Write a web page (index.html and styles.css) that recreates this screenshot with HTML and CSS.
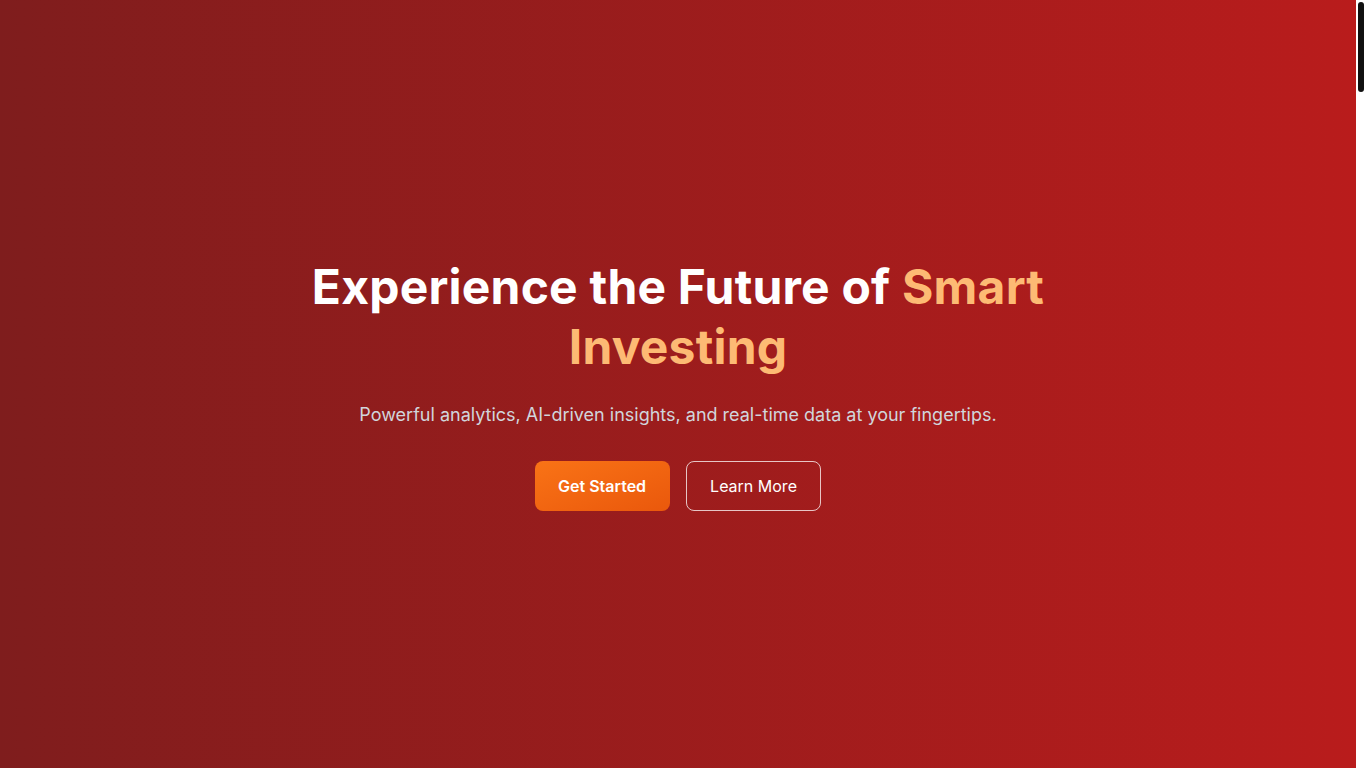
FILE: index.html
```html
<!DOCTYPE html>
<html lang="en">
<head>
<meta charset="utf-8">
<title>Smart Investing</title>
<link rel="stylesheet" href="styles.css">
</head>
<body>
<main class="page">
  <section class="hero">
    <div class="hero-inner">
      <h1 class="hero-title">Experience the Future of <span class="accent">Smart Investing</span></h1>
      <p class="hero-sub">Powerful analytics, AI-driven insights, and real-time data at your fingertips.</p>
      <div class="hero-actions">
        <a class="btn btn-primary" href="#">Get Started</a>
        <a class="btn btn-outline" href="#">Learn More</a>
      </div>
    </div>
  </section>
</main>
<div class="scrollbar" aria-hidden="true"><div class="scrollbar-thumb"></div></div>
</body>
</html>
```
FILE: styles.css
```css
* { box-sizing: border-box; }
body {
  margin: 0;
  font-family: Inter, "Noto Sans", sans-serif;
  background: #ffffff;
}
.page {
  margin-right: 10px;
}
.hero {
  min-height: 100vh;
  display: flex;
  align-items: center;
  justify-content: center;
  background: linear-gradient(to right, #7f1d1d, #b91c1c);
  padding: 0 16px;
}
.hero-inner {
  max-width: 768px;
  text-align: center;
}
.hero-title {
  margin: 0 0 24px;
  font-size: 48px;
  line-height: 60px;
  font-weight: 700;
  letter-spacing: 0.2px;
  color: #ffffff;
}
.accent { color: #fdba74; }
.hero-sub {
  margin: 0 0 32px;
  font-size: 18px;
  line-height: 28px;
  color: #d1d5db;
}
.hero-actions {
  display: flex;
  justify-content: center;
  gap: 16px;
}
.btn {
  display: inline-block;
  font-size: 16px;
  line-height: 24px;
  border-radius: 8px;
  text-decoration: none;
}
.btn-primary {
  background: linear-gradient(to bottom right, #f97316, #ea580c);
  color: #ffffff;
  font-weight: 600;
  padding: 13px 23.5px;
}
.btn-outline {
  padding: 12px 23.5px;
  border: 1px solid rgba(255, 255, 255, 0.75);
  color: #ffffff;
  font-weight: 400;
}
.scrollbar {
  position: fixed;
  top: 0;
  right: 0;
  width: 10px;
  height: 100vh;
  background: #ffffff;
  padding: 2px;
}
.scrollbar-thumb {
  width: 6px;
  height: 90px;
  border-radius: 3px;
  background: #111111;
}
```
